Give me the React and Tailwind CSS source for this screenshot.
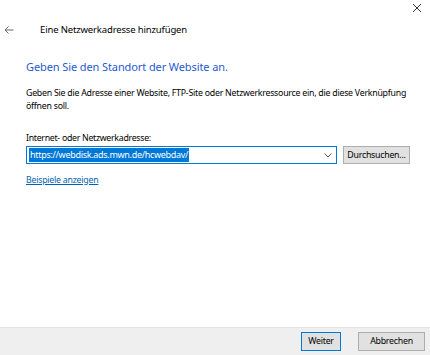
import React from 'react';

const font = { fontFamily: '"Noto Sans", "Open Sans", sans-serif' };

const Dialog = () => {
  return (
    <div className="w-[430px] h-[355px] bg-white flex flex-col text-black overflow-hidden" style={font}>
      {/* Title bar */}
      <div className="h-[18px] flex justify-end items-start pr-[8px] pt-[3px]">
        <svg width="10" height="10" viewBox="0 0 10 10" className="text-[#333]">
          <path d="M1 1 L9 9 M9 1 L1 9" stroke="currentColor" strokeWidth="1" />
        </svg>
      </div>

      {/* Header */}
      <div className="flex items-center h-[24px] pl-[4px]">
        <svg width="10" height="10" viewBox="0 0 10 10" className="text-[#666]">
          <path d="M9.5 5 H1 M4.5 1.5 L1 5 L4.5 8.5" stroke="currentColor" strokeWidth="1" fill="none" />
        </svg>
        <span className="ml-[26px] text-[9.5px] tracking-[-0.15px] leading-none">Eine Netzwerkadresse hinzufügen</span>
      </div>

      {/* Content */}
      <div className="flex-1 flex flex-col pl-[26px] pr-[10px]">
        <h1 className="mt-[16px] text-[11px] tracking-[-0.1px] leading-[18px] text-[#1f5ad0]">
          Geben Sie den Standort der Website an.
        </h1>
        <p className="mt-[11px] text-[8.8px] tracking-[-0.25px] leading-[13px]">
          Geben Sie die Adresse einer Website, FTP-Site oder Netzwerkressource ein, die diese Verknüpfung öffnen soll.
        </p>
        <label className="mt-[19px] text-[8.8px] tracking-[-0.3px] leading-[13px]">Internet- oder Netzwerkadresse:</label>
        <div className="mt-[1px] flex items-center gap-[6px]">
          <div className="w-[311px] shrink-0 h-[18px] border border-[#0078d7] flex items-center pl-[2px] pr-[4px]">
            <span className="bg-[#0078d7] text-white text-[9px] tracking-[-0.3px] leading-[14px] px-[1px]">
              https://webdisk.ads.mwn.de/hcwebdav/
            </span>
            <span className="flex-1" />
            <svg width="8" height="5" viewBox="0 0 8 5" className="text-[#555]">
              <path d="M0.5 0.5 L4 4 L7.5 0.5" stroke="currentColor" strokeWidth="1" fill="none" />
            </svg>
          </div>
          <button className="w-[67px] shrink-0 h-[18px] bg-[#e1e1e1] border border-[#adadad] text-[8.8px] tracking-[-0.25px] leading-none">
            Durchsuchen...
          </button>
        </div>
        <a className="mt-[10px] text-[8.8px] tracking-[-0.25px] leading-[13px] text-[#0063b1] underline self-start">
          Beispiele anzeigen
        </a>
      </div>

      {/* Footer */}
      <div className="h-[28px] bg-[#efefef] border-t border-[#e3e3e3] flex items-center justify-end gap-[17px] pr-[5px]">
        <button className="w-[40px] h-[19px] bg-[#e1e1e1] border border-[#0078d7] text-[8.8px] tracking-[-0.25px] leading-none">
          Weiter
        </button>
        <button className="w-[67px] h-[19px] bg-[#e1e1e1] border border-[#adadad] text-[8.8px] tracking-[-0.25px] leading-none">
          Abbrechen
        </button>
      </div>
    </div>
  );
};

export default function App() {
  return <Dialog />;
}
